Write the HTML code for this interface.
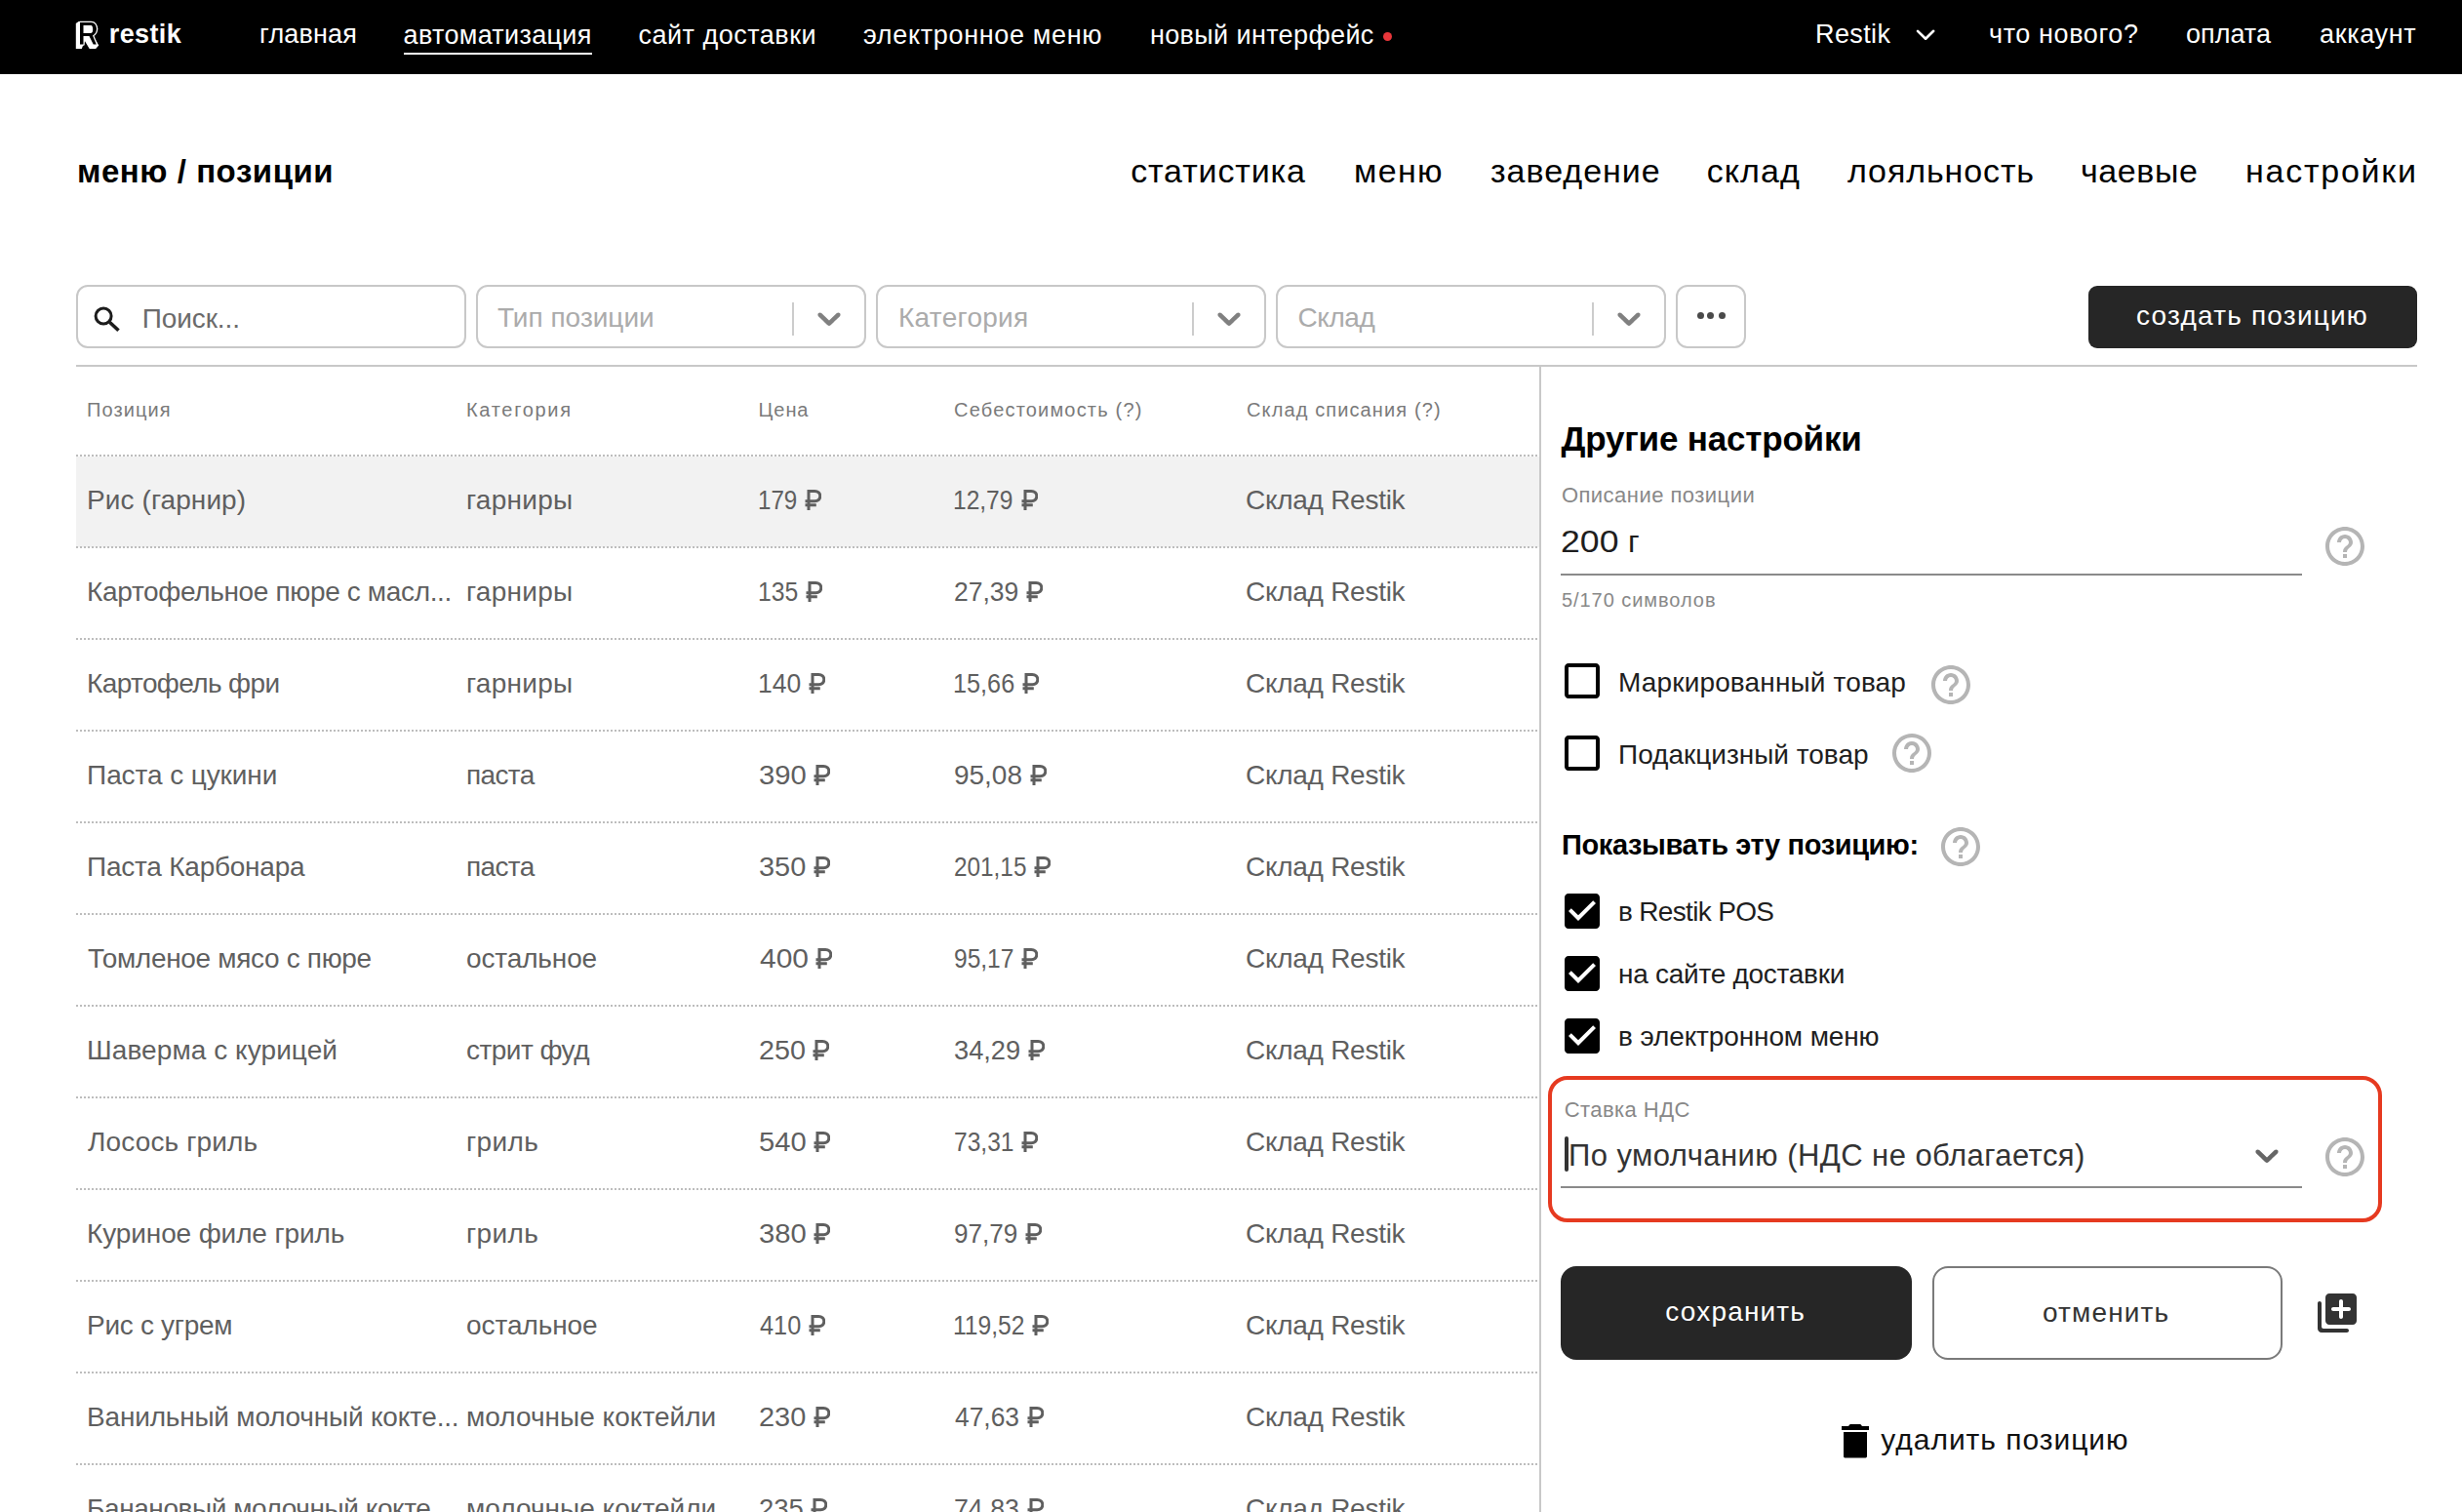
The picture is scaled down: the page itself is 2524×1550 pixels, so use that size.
<!DOCTYPE html><html lang="ru"><head><meta charset="utf-8"><title>restik</title><style>
html,body{margin:0;padding:0;background:#fff;}
body{width:2524px;height:1550px;overflow:hidden;position:relative;font-family:'Liberation Sans', sans-serif;}
.t{position:absolute;white-space:nowrap;font-family:'Liberation Sans', sans-serif;}
.a{position:absolute;}
.box{position:absolute;box-sizing:border-box;border:2px solid #c8c8c8;border-radius:12px;height:65px;top:292px;}
.sep{position:absolute;width:2px;background:#cccccc;top:310px;height:34px;}
.dot{position:absolute;width:7.2px;height:7.2px;border-radius:50%;background:#4a4a4a;top:320.2px;}
.dl{position:absolute;left:78px;width:1500px;height:2px;background-image:repeating-linear-gradient(90deg,#bdbdbd 0 2px,transparent 2px 4px);}

</style></head><body>
<div class="a" style="left:0;top:0;width:2524px;height:76px;background:#000"></div>
<svg class="a" style="left:82.4px;top:23.2px;overflow:visible" width="19" height="23" viewBox="0 0 19 23"><path d="M-4.2 1L-1.4 -0.9H11.6L18.4 6.8L13.6 14.3L19.3 23.4L16.1 26.9H9.7L4.9 19.1L1.8 26.9H-4.2Z" fill="#fff"/><path d="M0 0H11.4C15 0 17 3 17 6.8C17 9.8 15.6 12 13 13.5L16.8 22.4H13.7L9.5 14H3.5V22.4H0Z M3.5 3.1V11H11.2C12.8 11 13.2 9 13.2 7.1C13.2 5 12.6 3.1 11.2 3.1Z" fill="#000" stroke="#fff" stroke-width="2.5" paint-order="stroke" fill-rule="evenodd" stroke-linejoin="round"/></svg>
<div class="a" style="left:414px;top:54px;width:193px;height:2px;background:#fff"></div>
<div class="a" style="left:1417.5px;top:32.7px;width:9px;height:9px;border-radius:50%;background:#e8363a"></div>
<svg class="a" style="left:1962px;top:28px" width="26" height="16" viewBox="0 0 26 16"><polyline points="4,3.9 12.1,11.7 20.2,3.8" fill="none" stroke="#fff" stroke-width="2.6" stroke-linecap="round" stroke-linejoin="round"/></svg>
<div class="box" style="left:78px;width:400px"></div>
<div class="box" style="left:488px;width:400px"></div>
<div class="box" style="left:898px;width:400px"></div>
<div class="box" style="left:1308px;width:400px"></div>
<div class="sep" style="left:812.0px"></div>
<svg class="a" style="left:830.1px;top:306px" width="40" height="40" viewBox="0 0 20 20"><path d="M4.516 7.548c0.436-0.446 1.043-0.481 1.576 0l3.908 3.747 3.908-3.747c0.533-0.481 1.141-0.446 1.574 0 0.436 0.445 0.408 1.197 0 1.615-0.406 0.418-4.695 4.502-4.695 4.502-0.217 0.223-0.502 0.335-0.787 0.335s-0.57-0.112-0.789-0.335c0 0-4.287-4.084-4.695-4.502s-0.436-1.17 0-1.615z" fill="#808080"/></svg>
<div class="sep" style="left:1222.0px"></div>
<svg class="a" style="left:1240.1px;top:306px" width="40" height="40" viewBox="0 0 20 20"><path d="M4.516 7.548c0.436-0.446 1.043-0.481 1.576 0l3.908 3.747 3.908-3.747c0.533-0.481 1.141-0.446 1.574 0 0.436 0.445 0.408 1.197 0 1.615-0.406 0.418-4.695 4.502-4.695 4.502-0.217 0.223-0.502 0.335-0.787 0.335s-0.57-0.112-0.789-0.335c0 0-4.287-4.084-4.695-4.502s-0.436-1.17 0-1.615z" fill="#808080"/></svg>
<div class="sep" style="left:1632.1px"></div>
<svg class="a" style="left:1650.2px;top:306px" width="40" height="40" viewBox="0 0 20 20"><path d="M4.516 7.548c0.436-0.446 1.043-0.481 1.576 0l3.908 3.747 3.908-3.747c0.533-0.481 1.141-0.446 1.574 0 0.436 0.445 0.408 1.197 0 1.615-0.406 0.418-4.695 4.502-4.695 4.502-0.217 0.223-0.502 0.335-0.787 0.335s-0.57-0.112-0.789-0.335c0 0-4.287-4.084-4.695-4.502s-0.436-1.17 0-1.615z" fill="#808080"/></svg>
<div class="box" style="left:1718px;width:72px"></div>
<div class="dot" style="left:1739.5px"></div>
<div class="dot" style="left:1750.3px"></div>
<div class="dot" style="left:1761.5px"></div>
<svg class="a" style="left:90px;top:305px" width="40" height="40" viewBox="0 0 40 40"><circle cx="16.1" cy="19" r="8" fill="none" stroke="#1c1c1c" stroke-width="3"/><line x1="22.4" y1="25.3" x2="31.5" y2="33.8" stroke="#1c1c1c" stroke-width="3.6"/></svg>
<div class="a" style="left:2141px;top:293px;width:337px;height:64px;background:#262626;border-radius:9px"></div>
<div class="a" style="left:78px;top:374px;width:2400px;height:2px;background:#c8c8c8"></div>
<div class="a" style="left:1578px;top:376px;width:2px;height:1174px;background:#c8c8c8"></div>
<div class="a" style="left:78px;top:468px;width:1500px;height:93px;background:#f2f2f2"></div>
<div class="dl" style="top:466px"></div>
<div class="dl" style="top:560px"></div>
<div class="dl" style="top:654px"></div>
<div class="dl" style="top:748px"></div>
<div class="dl" style="top:842px"></div>
<div class="dl" style="top:936px"></div>
<div class="dl" style="top:1030px"></div>
<div class="dl" style="top:1124px"></div>
<div class="dl" style="top:1218px"></div>
<div class="dl" style="top:1312px"></div>
<div class="dl" style="top:1406px"></div>
<div class="dl" style="top:1500px"></div>
<div class="t" id="r0_0" style="left:89.10px;top:499px;font-size:28px;line-height:28px;color:#5f5f5f;letter-spacing:0.073px;">Рис (гарнир)</div>
<div class="t" id="r0_1" style="left:478.00px;top:499px;font-size:28px;line-height:28px;color:#5f5f5f;letter-spacing:0.267px;">гарниры</div>
<div class="t" id="r0_2" style="left:776.88px;top:499px;font-size:28px;line-height:28px;color:#5f5f5f;transform:scaleX(0.8614);transform-origin:0 0;">179</div>
<svg width="17" height="21" viewBox="0 0 17 21" style="position:absolute;left:825.0px;top:502.0px"><path d="M4 21V1.5H10.2C13.6 1.5 15.8 3.5 15.8 6.6C15.8 9.8 13.6 11.8 10.2 11.8H0.5M0.5 15.7H11.8" fill="none" stroke="#5f5f5f" stroke-width="3"/></svg>
<div class="t" id="r0_3" style="left:976.85px;top:499px;font-size:28px;line-height:28px;color:#5f5f5f;transform:scaleX(0.8765);transform-origin:0 0;">12,79</div>
<svg width="17" height="21" viewBox="0 0 17 21" style="position:absolute;left:1046.7px;top:502.0px"><path d="M4 21V1.5H10.2C13.6 1.5 15.8 3.5 15.8 6.6C15.8 9.8 13.6 11.8 10.2 11.8H0.5M0.5 15.7H11.8" fill="none" stroke="#5f5f5f" stroke-width="3"/></svg>
<div class="t" id="r0_4" style="left:1277.00px;top:499px;font-size:28px;line-height:28px;color:#5f5f5f;letter-spacing:-0.273px;">Склад Restik</div>
<div class="t" id="r1_0" style="left:89.10px;top:593px;font-size:28px;line-height:28px;color:#5f5f5f;letter-spacing:-0.350px;">Картофельное пюре с масл...</div>
<div class="t" id="r1_1" style="left:478.00px;top:593px;font-size:28px;line-height:28px;color:#5f5f5f;letter-spacing:0.267px;">гарниры</div>
<div class="t" id="r1_2" style="left:776.83px;top:593px;font-size:28px;line-height:28px;color:#5f5f5f;transform:scaleX(0.8841);transform-origin:0 0;">135</div>
<svg width="17" height="21" viewBox="0 0 17 21" style="position:absolute;left:826.0px;top:596.0px"><path d="M4 21V1.5H10.2C13.6 1.5 15.8 3.5 15.8 6.6C15.8 9.8 13.6 11.8 10.2 11.8H0.5M0.5 15.7H11.8" fill="none" stroke="#5f5f5f" stroke-width="3"/></svg>
<div class="t" id="r1_3" style="left:977.66px;top:593px;font-size:28px;line-height:28px;color:#5f5f5f;transform:scaleX(0.9449);transform-origin:0 0;">27,39</div>
<svg width="17" height="21" viewBox="0 0 17 21" style="position:absolute;left:1052.3px;top:596.0px"><path d="M4 21V1.5H10.2C13.6 1.5 15.8 3.5 15.8 6.6C15.8 9.8 13.6 11.8 10.2 11.8H0.5M0.5 15.7H11.8" fill="none" stroke="#5f5f5f" stroke-width="3"/></svg>
<div class="t" id="r1_4" style="left:1277.00px;top:593px;font-size:28px;line-height:28px;color:#5f5f5f;letter-spacing:-0.273px;">Склад Restik</div>
<div class="t" id="r2_0" style="left:89.10px;top:687px;font-size:28px;line-height:28px;color:#5f5f5f;letter-spacing:-0.633px;">Картофель фри</div>
<div class="t" id="r2_1" style="left:478.00px;top:687px;font-size:28px;line-height:28px;color:#5f5f5f;letter-spacing:0.267px;">гарниры</div>
<div class="t" id="r2_2" style="left:776.71px;top:687px;font-size:28px;line-height:28px;color:#5f5f5f;transform:scaleX(0.9455);transform-origin:0 0;">140</div>
<svg width="17" height="21" viewBox="0 0 17 21" style="position:absolute;left:828.7px;top:690.0px"><path d="M4 21V1.5H10.2C13.6 1.5 15.8 3.5 15.8 6.6C15.8 9.8 13.6 11.8 10.2 11.8H0.5M0.5 15.7H11.8" fill="none" stroke="#5f5f5f" stroke-width="3"/></svg>
<div class="t" id="r2_3" style="left:976.80px;top:687px;font-size:28px;line-height:28px;color:#5f5f5f;transform:scaleX(0.9015);transform-origin:0 0;">15,66</div>
<svg width="17" height="21" viewBox="0 0 17 21" style="position:absolute;left:1048.4px;top:690.0px"><path d="M4 21V1.5H10.2C13.6 1.5 15.8 3.5 15.8 6.6C15.8 9.8 13.6 11.8 10.2 11.8H0.5M0.5 15.7H11.8" fill="none" stroke="#5f5f5f" stroke-width="3"/></svg>
<div class="t" id="r2_4" style="left:1277.00px;top:687px;font-size:28px;line-height:28px;color:#5f5f5f;letter-spacing:-0.273px;">Склад Restik</div>
<div class="t" id="r3_0" style="left:89.10px;top:781px;font-size:28px;line-height:28px;color:#5f5f5f;letter-spacing:-0.085px;">Паста с цукини</div>
<div class="t" id="r3_1" style="left:478.00px;top:781px;font-size:28px;line-height:28px;color:#5f5f5f;letter-spacing:-0.650px;">паста</div>
<div class="t" id="r3_2" style="left:777.56px;top:781px;font-size:28px;line-height:28px;color:#5f5f5f;transform:scaleX(1.0444);transform-origin:0 0;">390</div>
<svg width="17" height="21" viewBox="0 0 17 21" style="position:absolute;left:834.1px;top:784.0px"><path d="M4 21V1.5H10.2C13.6 1.5 15.8 3.5 15.8 6.6C15.8 9.8 13.6 11.8 10.2 11.8H0.5M0.5 15.7H11.8" fill="none" stroke="#5f5f5f" stroke-width="3"/></svg>
<div class="t" id="r3_3" style="left:977.60px;top:781px;font-size:28px;line-height:28px;color:#5f5f5f;transform:scaleX(0.9986);transform-origin:0 0;">95,08</div>
<svg width="17" height="21" viewBox="0 0 17 21" style="position:absolute;left:1056.0px;top:784.0px"><path d="M4 21V1.5H10.2C13.6 1.5 15.8 3.5 15.8 6.6C15.8 9.8 13.6 11.8 10.2 11.8H0.5M0.5 15.7H11.8" fill="none" stroke="#5f5f5f" stroke-width="3"/></svg>
<div class="t" id="r3_4" style="left:1277.00px;top:781px;font-size:28px;line-height:28px;color:#5f5f5f;letter-spacing:-0.273px;">Склад Restik</div>
<div class="t" id="r4_0" style="left:89.10px;top:875px;font-size:28px;line-height:28px;color:#5f5f5f;letter-spacing:-0.236px;">Паста Карбонара</div>
<div class="t" id="r4_1" style="left:478.00px;top:875px;font-size:28px;line-height:28px;color:#5f5f5f;letter-spacing:-0.650px;">паста</div>
<div class="t" id="r4_2" style="left:777.57px;top:875px;font-size:28px;line-height:28px;color:#5f5f5f;transform:scaleX(1.0333);transform-origin:0 0;">350</div>
<svg width="17" height="21" viewBox="0 0 17 21" style="position:absolute;left:833.6px;top:878.0px"><path d="M4 21V1.5H10.2C13.6 1.5 15.8 3.5 15.8 6.6C15.8 9.8 13.6 11.8 10.2 11.8H0.5M0.5 15.7H11.8" fill="none" stroke="#5f5f5f" stroke-width="3"/></svg>
<div class="t" id="r4_3" style="left:977.73px;top:875px;font-size:28px;line-height:28px;color:#5f5f5f;transform:scaleX(0.8690);transform-origin:0 0;">201,15</div>
<svg width="17" height="21" viewBox="0 0 17 21" style="position:absolute;left:1060.1px;top:878.0px"><path d="M4 21V1.5H10.2C13.6 1.5 15.8 3.5 15.8 6.6C15.8 9.8 13.6 11.8 10.2 11.8H0.5M0.5 15.7H11.8" fill="none" stroke="#5f5f5f" stroke-width="3"/></svg>
<div class="t" id="r4_4" style="left:1277.00px;top:875px;font-size:28px;line-height:28px;color:#5f5f5f;letter-spacing:-0.273px;">Склад Restik</div>
<div class="t" id="r5_0" style="left:90.10px;top:969px;font-size:28px;line-height:28px;color:#5f5f5f;letter-spacing:-0.321px;">Томленое мясо с пюре</div>
<div class="t" id="r5_1" style="left:478.00px;top:969px;font-size:28px;line-height:28px;color:#5f5f5f;letter-spacing:-0.125px;">остальное</div>
<div class="t" id="r5_2" style="left:778.60px;top:969px;font-size:28px;line-height:28px;color:#5f5f5f;transform:scaleX(1.0696);transform-origin:0 0;">400</div>
<svg width="17" height="21" viewBox="0 0 17 21" style="position:absolute;left:836.3px;top:972.0px"><path d="M4 21V1.5H10.2C13.6 1.5 15.8 3.5 15.8 6.6C15.8 9.8 13.6 11.8 10.2 11.8H0.5M0.5 15.7H11.8" fill="none" stroke="#5f5f5f" stroke-width="3"/></svg>
<div class="t" id="r5_3" style="left:977.72px;top:969px;font-size:28px;line-height:28px;color:#5f5f5f;transform:scaleX(0.8765);transform-origin:0 0;">95,17</div>
<svg width="17" height="21" viewBox="0 0 17 21" style="position:absolute;left:1046.7px;top:972.0px"><path d="M4 21V1.5H10.2C13.6 1.5 15.8 3.5 15.8 6.6C15.8 9.8 13.6 11.8 10.2 11.8H0.5M0.5 15.7H11.8" fill="none" stroke="#5f5f5f" stroke-width="3"/></svg>
<div class="t" id="r5_4" style="left:1277.00px;top:969px;font-size:28px;line-height:28px;color:#5f5f5f;letter-spacing:-0.273px;">Склад Restik</div>
<div class="t" id="r6_0" style="left:89.10px;top:1063px;font-size:28px;line-height:28px;color:#5f5f5f;letter-spacing:0.069px;">Шаверма с курицей</div>
<div class="t" id="r6_1" style="left:478.00px;top:1063px;font-size:28px;line-height:28px;color:#5f5f5f;letter-spacing:-0.537px;">стрит фуд</div>
<div class="t" id="r6_2" style="left:777.57px;top:1063px;font-size:28px;line-height:28px;color:#5f5f5f;transform:scaleX(1.0267);transform-origin:0 0;">250</div>
<svg width="17" height="21" viewBox="0 0 17 21" style="position:absolute;left:833.3px;top:1066.0px"><path d="M4 21V1.5H10.2C13.6 1.5 15.8 3.5 15.8 6.6C15.8 9.8 13.6 11.8 10.2 11.8H0.5M0.5 15.7H11.8" fill="none" stroke="#5f5f5f" stroke-width="3"/></svg>
<div class="t" id="r6_3" style="left:977.63px;top:1063px;font-size:28px;line-height:28px;color:#5f5f5f;transform:scaleX(0.9725);transform-origin:0 0;">34,29</div>
<svg width="17" height="21" viewBox="0 0 17 21" style="position:absolute;left:1054.2px;top:1066.0px"><path d="M4 21V1.5H10.2C13.6 1.5 15.8 3.5 15.8 6.6C15.8 9.8 13.6 11.8 10.2 11.8H0.5M0.5 15.7H11.8" fill="none" stroke="#5f5f5f" stroke-width="3"/></svg>
<div class="t" id="r6_4" style="left:1277.00px;top:1063px;font-size:28px;line-height:28px;color:#5f5f5f;letter-spacing:-0.273px;">Склад Restik</div>
<div class="t" id="r7_0" style="left:90.10px;top:1157px;font-size:28px;line-height:28px;color:#5f5f5f;letter-spacing:0.127px;">Лосось гриль</div>
<div class="t" id="r7_1" style="left:478.00px;top:1157px;font-size:28px;line-height:28px;color:#5f5f5f;letter-spacing:0.350px;">гриль</div>
<div class="t" id="r7_2" style="left:777.56px;top:1157px;font-size:28px;line-height:28px;color:#5f5f5f;transform:scaleX(1.0422);transform-origin:0 0;">540</div>
<svg width="17" height="21" viewBox="0 0 17 21" style="position:absolute;left:834.0px;top:1160.0px"><path d="M4 21V1.5H10.2C13.6 1.5 15.8 3.5 15.8 6.6C15.8 9.8 13.6 11.8 10.2 11.8H0.5M0.5 15.7H11.8" fill="none" stroke="#5f5f5f" stroke-width="3"/></svg>
<div class="t" id="r7_3" style="left:977.72px;top:1157px;font-size:28px;line-height:28px;color:#5f5f5f;transform:scaleX(0.8779);transform-origin:0 0;">73,31</div>
<svg width="17" height="21" viewBox="0 0 17 21" style="position:absolute;left:1046.8px;top:1160.0px"><path d="M4 21V1.5H10.2C13.6 1.5 15.8 3.5 15.8 6.6C15.8 9.8 13.6 11.8 10.2 11.8H0.5M0.5 15.7H11.8" fill="none" stroke="#5f5f5f" stroke-width="3"/></svg>
<div class="t" id="r7_4" style="left:1277.00px;top:1157px;font-size:28px;line-height:28px;color:#5f5f5f;letter-spacing:-0.273px;">Склад Restik</div>
<div class="t" id="r8_0" style="left:89.10px;top:1251px;font-size:28px;line-height:28px;color:#5f5f5f;letter-spacing:-0.124px;">Куриное филе гриль</div>
<div class="t" id="r8_1" style="left:478.00px;top:1251px;font-size:28px;line-height:28px;color:#5f5f5f;letter-spacing:0.350px;">гриль</div>
<div class="t" id="r8_2" style="left:777.56px;top:1251px;font-size:28px;line-height:28px;color:#5f5f5f;transform:scaleX(1.0444);transform-origin:0 0;">380</div>
<svg width="17" height="21" viewBox="0 0 17 21" style="position:absolute;left:834.1px;top:1254.0px"><path d="M4 21V1.5H10.2C13.6 1.5 15.8 3.5 15.8 6.6C15.8 9.8 13.6 11.8 10.2 11.8H0.5M0.5 15.7H11.8" fill="none" stroke="#5f5f5f" stroke-width="3"/></svg>
<div class="t" id="r8_3" style="left:977.67px;top:1251px;font-size:28px;line-height:28px;color:#5f5f5f;transform:scaleX(0.9304);transform-origin:0 0;">97,79</div>
<svg width="17" height="21" viewBox="0 0 17 21" style="position:absolute;left:1051.3px;top:1254.0px"><path d="M4 21V1.5H10.2C13.6 1.5 15.8 3.5 15.8 6.6C15.8 9.8 13.6 11.8 10.2 11.8H0.5M0.5 15.7H11.8" fill="none" stroke="#5f5f5f" stroke-width="3"/></svg>
<div class="t" id="r8_4" style="left:1277.00px;top:1251px;font-size:28px;line-height:28px;color:#5f5f5f;letter-spacing:-0.273px;">Склад Restik</div>
<div class="t" id="r9_0" style="left:89.10px;top:1345px;font-size:28px;line-height:28px;color:#5f5f5f;letter-spacing:-0.310px;">Рис с угрем</div>
<div class="t" id="r9_1" style="left:478.00px;top:1345px;font-size:28px;line-height:28px;color:#5f5f5f;letter-spacing:-0.062px;">остальное</div>
<div class="t" id="r9_2" style="left:778.60px;top:1345px;font-size:28px;line-height:28px;color:#5f5f5f;transform:scaleX(0.9043);transform-origin:0 0;">410</div>
<svg width="17" height="21" viewBox="0 0 17 21" style="position:absolute;left:828.7px;top:1348.0px"><path d="M4 21V1.5H10.2C13.6 1.5 15.8 3.5 15.8 6.6C15.8 9.8 13.6 11.8 10.2 11.8H0.5M0.5 15.7H11.8" fill="none" stroke="#5f5f5f" stroke-width="3"/></svg>
<div class="t" id="r9_3" style="left:976.84px;top:1345px;font-size:28px;line-height:28px;color:#5f5f5f;transform:scaleX(0.8790);transform-origin:0 0;">119,52</div>
<svg width="17" height="21" viewBox="0 0 17 21" style="position:absolute;left:1058.3px;top:1348.0px"><path d="M4 21V1.5H10.2C13.6 1.5 15.8 3.5 15.8 6.6C15.8 9.8 13.6 11.8 10.2 11.8H0.5M0.5 15.7H11.8" fill="none" stroke="#5f5f5f" stroke-width="3"/></svg>
<div class="t" id="r9_4" style="left:1277.00px;top:1345px;font-size:28px;line-height:28px;color:#5f5f5f;letter-spacing:-0.273px;">Склад Restik</div>
<div class="t" id="r10_0" style="left:89.10px;top:1439px;font-size:28px;line-height:28px;color:#5f5f5f;letter-spacing:-0.204px;">Ванильный молочный кокте...</div>
<div class="t" id="r10_1" style="left:478.00px;top:1439px;font-size:28px;line-height:28px;color:#5f5f5f;letter-spacing:0.031px;">молочные коктейли</div>
<div class="t" id="r10_2" style="left:777.57px;top:1439px;font-size:28px;line-height:28px;color:#5f5f5f;transform:scaleX(1.0333);transform-origin:0 0;">230</div>
<svg width="17" height="21" viewBox="0 0 17 21" style="position:absolute;left:833.6px;top:1442.0px"><path d="M4 21V1.5H10.2C13.6 1.5 15.8 3.5 15.8 6.6C15.8 9.8 13.6 11.8 10.2 11.8H0.5M0.5 15.7H11.8" fill="none" stroke="#5f5f5f" stroke-width="3"/></svg>
<div class="t" id="r10_3" style="left:978.60px;top:1439px;font-size:28px;line-height:28px;color:#5f5f5f;transform:scaleX(0.9414);transform-origin:0 0;">47,63</div>
<svg width="17" height="21" viewBox="0 0 17 21" style="position:absolute;left:1053.0px;top:1442.0px"><path d="M4 21V1.5H10.2C13.6 1.5 15.8 3.5 15.8 6.6C15.8 9.8 13.6 11.8 10.2 11.8H0.5M0.5 15.7H11.8" fill="none" stroke="#5f5f5f" stroke-width="3"/></svg>
<div class="t" id="r10_4" style="left:1277.00px;top:1439px;font-size:28px;line-height:28px;color:#5f5f5f;letter-spacing:-0.273px;">Склад Restik</div>
<div class="t" id="r11_0" style="left:89.10px;top:1533px;font-size:28px;line-height:28px;color:#5f5f5f;letter-spacing:-0.427px;">Банановый молочный кокте...</div>
<div class="t" id="r11_1" style="left:478.00px;top:1533px;font-size:28px;line-height:28px;color:#5f5f5f;letter-spacing:0.031px;">молочные коктейли</div>
<div class="t" id="r11_2" style="left:777.62px;top:1533px;font-size:28px;line-height:28px;color:#5f5f5f;transform:scaleX(0.9822);transform-origin:0 0;">235</div>
<svg width="17" height="21" viewBox="0 0 17 21" style="position:absolute;left:831.3px;top:1536.0px"><path d="M4 21V1.5H10.2C13.6 1.5 15.8 3.5 15.8 6.6C15.8 9.8 13.6 11.8 10.2 11.8H0.5M0.5 15.7H11.8" fill="none" stroke="#5f5f5f" stroke-width="3"/></svg>
<div class="t" id="r11_3" style="left:977.64px;top:1533px;font-size:28px;line-height:28px;color:#5f5f5f;transform:scaleX(0.9551);transform-origin:0 0;">74,83</div>
<svg width="17" height="21" viewBox="0 0 17 21" style="position:absolute;left:1053.0px;top:1536.0px"><path d="M4 21V1.5H10.2C13.6 1.5 15.8 3.5 15.8 6.6C15.8 9.8 13.6 11.8 10.2 11.8H0.5M0.5 15.7H11.8" fill="none" stroke="#5f5f5f" stroke-width="3"/></svg>
<div class="t" id="r11_4" style="left:1277.00px;top:1533px;font-size:28px;line-height:28px;color:#5f5f5f;letter-spacing:-0.273px;">Склад Restik</div>
<div class="a" style="left:1600px;top:588px;width:760px;height:2px;background:#8a8a8a"></div>
<div class="a" style="left:1600px;top:1216px;width:760px;height:2px;background:#8a8a8a"></div>
<svg class="a" style="left:2380px;top:536px" width="48" height="48" viewBox="0 0 24 24"><path d="M11 18h2v-2h-2v2zm1-16C6.48 2 2 6.48 2 12s4.48 10 10 10 10-4.48 10-10S17.52 2 12 2zm0 18c-4.41 0-8-3.590-8-8s3.59-8 8-8 8 3.59 8 8-3.59 8-8 8zm0-14c-2.21 0-4 1.79-4 4h2c0-1.1.9-2 2-2s2 .9 2 2c0 2-3 1.75-3 5h2c0-2.25 3-2.5 3-5 0-2.21-1.79-4-4-4z" fill="#b5b5b5"/></svg>
<svg class="a" style="left:1976px;top:678px" width="48" height="48" viewBox="0 0 24 24"><path d="M11 18h2v-2h-2v2zm1-16C6.48 2 2 6.48 2 12s4.48 10 10 10 10-4.48 10-10S17.52 2 12 2zm0 18c-4.41 0-8-3.590-8-8s3.59-8 8-8 8 3.59 8 8-3.59 8-8 8zm0-14c-2.21 0-4 1.79-4 4h2c0-1.1.9-2 2-2s2 .9 2 2c0 2-3 1.75-3 5h2c0-2.25 3-2.5 3-5 0-2.21-1.79-4-4-4z" fill="#b5b5b5"/></svg>
<svg class="a" style="left:1936px;top:748px" width="48" height="48" viewBox="0 0 24 24"><path d="M11 18h2v-2h-2v2zm1-16C6.48 2 2 6.48 2 12s4.48 10 10 10 10-4.48 10-10S17.52 2 12 2zm0 18c-4.41 0-8-3.590-8-8s3.59-8 8-8 8 3.59 8 8-3.59 8-8 8zm0-14c-2.21 0-4 1.79-4 4h2c0-1.1.9-2 2-2s2 .9 2 2c0 2-3 1.75-3 5h2c0-2.25 3-2.5 3-5 0-2.21-1.79-4-4-4z" fill="#b5b5b5"/></svg>
<svg class="a" style="left:1986px;top:844px" width="48" height="48" viewBox="0 0 24 24"><path d="M11 18h2v-2h-2v2zm1-16C6.48 2 2 6.48 2 12s4.48 10 10 10 10-4.48 10-10S17.52 2 12 2zm0 18c-4.41 0-8-3.590-8-8s3.59-8 8-8 8 3.59 8 8-3.59 8-8 8zm0-14c-2.21 0-4 1.79-4 4h2c0-1.1.9-2 2-2s2 .9 2 2c0 2-3 1.75-3 5h2c0-2.25 3-2.5 3-5 0-2.21-1.79-4-4-4z" fill="#b5b5b5"/></svg>
<svg class="a" style="left:2380px;top:1161.5px" width="48" height="48" viewBox="0 0 24 24"><path d="M11 18h2v-2h-2v2zm1-16C6.48 2 2 6.48 2 12s4.48 10 10 10 10-4.48 10-10S17.52 2 12 2zm0 18c-4.41 0-8-3.590-8-8s3.59-8 8-8 8 3.59 8 8-3.59 8-8 8zm0-14c-2.21 0-4 1.79-4 4h2c0-1.1.9-2 2-2s2 .9 2 2c0 2-3 1.75-3 5h2c0-2.25 3-2.5 3-5 0-2.21-1.79-4-4-4z" fill="#b5b5b5"/></svg>
<svg class="a" style="left:1598px;top:674px" width="48" height="48" viewBox="0 0 24 24"><path d="M19 5v14H5V5h14m0-2H5c-1.1 0-2 .9-2 2v14c0 1.1.9 2 2 2h14c1.1 0 2-.9 2-2V5c0-1.1-.9-2-2-2z" fill="#000"/></svg>
<svg class="a" style="left:1598px;top:748px" width="48" height="48" viewBox="0 0 24 24"><path d="M19 5v14H5V5h14m0-2H5c-1.1 0-2 .9-2 2v14c0 1.1.9 2 2 2h14c1.1 0 2-.9 2-2V5c0-1.1-.9-2-2-2z" fill="#000"/></svg>
<svg class="a" style="left:1598px;top:910px" width="48" height="48" viewBox="0 0 24 24"><path d="M19 3H5c-1.11 0-2 .9-2 2v14c0 1.1.89 2 2 2h14c1.11 0 2-.9 2-2V5c0-1.1-.89-2-2-2zm-9 14l-5-5 1.41-1.41L10 14.17l7.59-7.59L19 8l-9 9z" fill="#000"/></svg>
<svg class="a" style="left:1598px;top:974px" width="48" height="48" viewBox="0 0 24 24"><path d="M19 3H5c-1.11 0-2 .9-2 2v14c0 1.1.89 2 2 2h14c1.11 0 2-.9 2-2V5c0-1.1-.89-2-2-2zm-9 14l-5-5 1.41-1.41L10 14.17l7.59-7.59L19 8l-9 9z" fill="#000"/></svg>
<svg class="a" style="left:1598px;top:1038px" width="48" height="48" viewBox="0 0 24 24"><path d="M19 3H5c-1.11 0-2 .9-2 2v14c0 1.1.89 2 2 2h14c1.11 0 2-.9 2-2V5c0-1.1-.89-2-2-2zm-9 14l-5-5 1.41-1.41L10 14.17l7.59-7.59L19 8l-9 9z" fill="#000"/></svg>
<div class="a" style="left:1586.8px;top:1102.9px;width:855px;height:150px;box-sizing:border-box;border:4px solid #e63a20;border-radius:20px"></div>
<div class="a" style="left:1604px;top:1165px;width:4px;height:36px;background:#333;border-radius:2px"></div>
<svg class="a" style="left:2303.6px;top:1164px" width="40" height="40" viewBox="0 0 20 20"><path d="M4.516 7.548c0.436-0.446 1.043-0.481 1.576 0l3.908 3.747 3.908-3.747c0.533-0.481 1.141-0.446 1.574 0 0.436 0.445 0.408 1.197 0 1.615-0.406 0.418-4.695 4.502-4.695 4.502-0.217 0.223-0.502 0.335-0.787 0.335s-0.57-0.112-0.789-0.335c0 0-4.287-4.084-4.695-4.502s-0.436-1.17 0-1.615z" fill="#666"/></svg>
<div class="a" style="left:1600px;top:1298px;width:360px;height:96px;background:#262626;border-radius:16px"></div>
<div class="a" style="left:1980.5px;top:1298px;width:359px;height:96px;box-sizing:border-box;border:2px solid #7a7a7a;border-radius:16px"></div>
<svg class="a" style="left:2372px;top:1322px" width="48" height="48" viewBox="0 0 24 24"><path d="M3 6c-.55 0-1 .45-1 1v13c0 1.1.9 2 2 2h13c.55 0 1-.45 1-1s-.45-1-1-1H5c-.55 0-1-.45-1-1V7c0-.55-.45-1-1-1zm17-4H8c-1.1 0-2 .9-2 2v12c0 1.1.9 2 2 2h12c1.1 0 2-.9 2-2V4c0-1.1-.9-2-2-2zm-2 9h-3v3c0 .55-.45 1-1 1s-1-.45-1-1v-3h-3c-.55 0-1-.45-1-1s.45-1 1-1h3V6c0-.55.45-1 1-1s1 .45 1 1v3h3c.55 0 1 .45 1 1s-.45 1-1 1z" fill="#333"/></svg>
<svg class="a" style="left:1878px;top:1453.7px" width="48" height="48" viewBox="0 0 24 24"><path d="M6 7h12v12.5c0 .45-.35.7-.7.7H6.7c-.45 0-.7-.25-.7-.7zM19 4h-3.5l-.6-.8c-.2-.15-.4-.2-.6-.2h-4.6c-.2 0-.4.05-.6.2L8.5 4H5v2h14V4z" fill="#000"/></svg>
<div class="t" id="n_restik" style="left:111.80px;top:22px;font-size:27px;line-height:27px;font-weight:700;color:#ffffff;letter-spacing:0.360px;">restik</div>
<div class="t" id="n_glav" style="left:266.00px;top:22px;font-size:27px;line-height:27px;color:#ffffff;letter-spacing:0.167px;">главная</div>
<div class="t" id="n_avto" style="left:413.60px;top:23px;font-size:27px;line-height:27px;color:#ffffff;letter-spacing:0.325px;">автоматизация</div>
<div class="t" id="n_sait" style="left:654.40px;top:23px;font-size:27px;line-height:27px;color:#ffffff;letter-spacing:0.508px;">сайт доставки</div>
<div class="t" id="n_elek" style="left:885.00px;top:23px;font-size:27px;line-height:27px;color:#ffffff;letter-spacing:0.667px;">электронное меню</div>
<div class="t" id="n_new" style="left:1178.90px;top:23px;font-size:27px;line-height:27px;color:#ffffff;letter-spacing:0.379px;">новый интерфейс</div>
<div class="t" id="n_rest" style="left:1861.00px;top:22px;font-size:27px;line-height:27px;color:#ffffff;letter-spacing:0.400px;">Restik</div>
<div class="t" id="n_chto" style="left:2039.00px;top:22px;font-size:27px;line-height:27px;color:#ffffff;letter-spacing:0.600px;">что нового?</div>
<div class="t" id="n_opl" style="left:2241.00px;top:22px;font-size:27px;line-height:27px;color:#ffffff;">оплата</div>
<div class="t" id="n_akk" style="left:2378.00px;top:22px;font-size:27px;line-height:27px;color:#ffffff;letter-spacing:0.667px;">аккаунт</div>
<div class="t" id="t_title" style="left:79.00px;top:159px;font-size:33px;line-height:33px;font-weight:700;color:#000;letter-spacing:0.538px;">меню / позиции</div>
<div class="t" id="s1" style="left:1159.20px;top:158px;font-size:34px;line-height:34px;color:#000;letter-spacing:0.867px;">статистика</div>
<div class="t" id="s2" style="left:1388.00px;top:158px;font-size:34px;line-height:34px;color:#000;letter-spacing:1.333px;">меню</div>
<div class="t" id="s3" style="left:1528.00px;top:158px;font-size:34px;line-height:34px;color:#000;letter-spacing:1.000px;">заведение</div>
<div class="t" id="s4" style="left:1749.70px;top:158px;font-size:34px;line-height:34px;color:#000;letter-spacing:1.075px;">склад</div>
<div class="t" id="s5" style="left:1894.00px;top:158px;font-size:34px;line-height:34px;color:#000;letter-spacing:0.889px;">лояльность</div>
<div class="t" id="s6" style="left:2133.00px;top:158px;font-size:34px;line-height:34px;color:#000;letter-spacing:0.600px;">чаевые</div>
<div class="t" id="s7" style="left:2302.00px;top:158px;font-size:34px;line-height:34px;color:#000;letter-spacing:1.750px;">настройки</div>
<div class="t" id="f_search" style="left:145.70px;top:313px;font-size:28px;line-height:28px;color:#6b6b6b;letter-spacing:-0.086px;">Поиск...</div>
<div class="t" id="f_type" style="left:510.00px;top:312px;font-size:28px;line-height:28px;color:#ababab;">Тип позиции</div>
<div class="t" id="f_cat" style="left:921.00px;top:312px;font-size:28px;line-height:28px;color:#ababab;letter-spacing:0.287px;">Категория</div>
<div class="t" id="f_sklad" style="left:1330.50px;top:312px;font-size:28px;line-height:28px;color:#ababab;letter-spacing:-0.450px;">Склад</div>
<div class="t" id="b_create" style="left:2190.00px;top:310px;font-size:28px;line-height:28px;color:#ffffff;letter-spacing:1.214px;">создать позицию</div>
<div class="t" id="h1" style="left:88.90px;top:410px;font-size:20px;line-height:20px;color:#7a7a7a;letter-spacing:1.117px;">Позиция</div>
<div class="t" id="h2" style="left:478.00px;top:410px;font-size:20px;line-height:20px;color:#7a7a7a;letter-spacing:1.688px;">Категория</div>
<div class="t" id="h3" style="left:777.60px;top:410px;font-size:20px;line-height:20px;color:#7a7a7a;letter-spacing:0.933px;">Цена</div>
<div class="t" id="h4" style="left:978.00px;top:410px;font-size:20px;line-height:20px;color:#7a7a7a;letter-spacing:1.188px;">Себестоимость (?)</div>
<div class="t" id="h5" style="left:1278.00px;top:410px;font-size:20px;line-height:20px;color:#7a7a7a;letter-spacing:1.118px;">Склад списания (?)</div>
<div class="t" id="p_title" style="left:1600.40px;top:432px;font-size:35px;line-height:35px;font-weight:700;color:#000;letter-spacing:-0.180px;">Другие настройки</div>
<div class="t" id="p_desc" style="left:1600.90px;top:497px;font-size:22px;line-height:22px;color:#888888;letter-spacing:0.467px;">Описание позиции</div>
<div class="t" id="p_200" style="left:1599.79px;top:539px;font-size:32px;line-height:32px;color:#1e1e1e;transform:scaleX(1.1135);transform-origin:0 0;">200</div>
<div class="t" id="p_200g" style="left:1668.90px;top:539px;font-size:32px;line-height:32px;color:#1e1e1e;">г</div>
<div class="t" id="p_cnt" style="left:1600.90px;top:605px;font-size:20px;line-height:20px;color:#888888;letter-spacing:0.954px;">5/170 символов</div>
<div class="t" id="p_mark" style="left:1659.00px;top:686px;font-size:28px;line-height:28px;color:#1e1e1e;letter-spacing:0.150px;">Маркированный товар</div>
<div class="t" id="p_akc" style="left:1659.00px;top:760px;font-size:28px;line-height:28px;color:#1e1e1e;">Подакцизный товар</div>
<div class="t" id="p_show" style="left:1601.00px;top:852px;font-size:29px;line-height:29px;font-weight:700;color:#000;letter-spacing:-0.373px;">Показывать эту позицию:</div>
<div class="t" id="p_pos" style="left:1659.00px;top:921px;font-size:28px;line-height:28px;color:#1e1e1e;letter-spacing:-0.673px;">в Restik POS</div>
<div class="t" id="p_site" style="left:1659.00px;top:985px;font-size:28px;line-height:28px;color:#1e1e1e;letter-spacing:-0.269px;">на сайте доставки</div>
<div class="t" id="p_emenu" style="left:1659.00px;top:1049px;font-size:28px;line-height:28px;color:#1e1e1e;letter-spacing:-0.118px;">в электронном меню</div>
<div class="t" id="p_nds" style="left:1603.70px;top:1127px;font-size:22px;line-height:22px;color:#888888;letter-spacing:0.433px;">Ставка НДС</div>
<div class="t" id="p_def" style="left:1608.00px;top:1169px;font-size:31px;line-height:31px;color:#333333;letter-spacing:0.452px;">По умолчанию (НДС не облагается)</div>
<div class="t" id="b_save" style="left:1707.30px;top:1331px;font-size:28px;line-height:28px;color:#ffffff;letter-spacing:1.175px;">сохранить</div>
<div class="t" id="b_cancel" style="left:2094.00px;top:1332px;font-size:28px;line-height:28px;color:#333333;letter-spacing:1.143px;">отменить</div>
<div class="t" id="b_del" style="left:1928.30px;top:1461px;font-size:30px;line-height:30px;color:#111;letter-spacing:0.971px;">удалить позицию</div>
</body></html>
